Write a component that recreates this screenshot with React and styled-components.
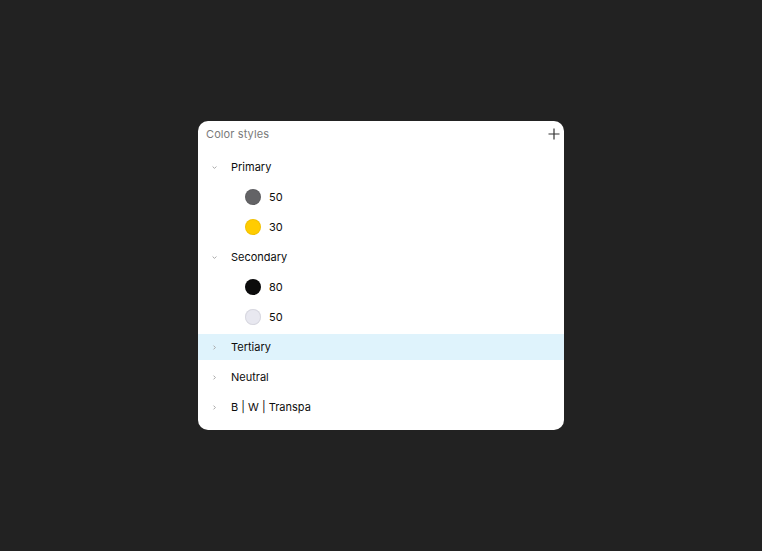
import React from "react"
import styled, { createGlobalStyle } from "styled-components"

const GlobalStyle = createGlobalStyle`
  html, body {
    margin: 0;
    padding: 0;
    background: #222222;
    font-family: Inter, "Noto Sans", sans-serif;
  }
`

const Stage = styled.div`
  width: 762px;
  height: 551px;
  display: flex;
  padding: 121px 0 0 198px;
  box-sizing: border-box;
  background: #222222;
`

const Panel = styled.div`
  width: 366px;
  height: 309px;
  background: #ffffff;
  border-radius: 10px;
  overflow: hidden;
  display: flex;
  flex-direction: column;
`

const Header = styled.div`
  height: 26px;
  display: flex;
  align-items: center;
  justify-content: space-between;
  padding: 0 0 0 8px;
`

const Title = styled.span`
  font-size: 11px;
  color: #7a7a7a;
  letter-spacing: 0.1px;
`

const AddButton = styled.button`
  width: 20px;
  height: 20px;
  border: none;
  background: none;
  padding: 0;
  display: flex;
  align-items: center;
  justify-content: center;
  color: #333;
`

const List = styled.div`
  padding-top: 5px;
  display: flex;
  flex-direction: column;
`

const Row = styled.div`
  height: 26px;
  margin: 2px 0;
  display: flex;
  align-items: center;
  padding-left: ${(p) => (p.$child ? 47 : 14)}px;
  background: ${(p) => (p.$active ? "#dff3fc" : "transparent")};
  font-size: 11px;
  color: #0d0d0d;
`

const Chevron = styled.span`
  width: 5px;
  height: 5px;
  display: flex;
  align-items: center;
  justify-content: center;
  margin-right: 14px;
  color: #a8a8a8;
`

const Swatch = styled.span`
  width: 16px;
  height: 16px;
  border-radius: 50%;
  background: ${(p) => p.$color};
  box-shadow: inset 0 0 0 1px ${(p) => (p.$outline ? "#d8d8e0" : "rgba(0,0,0,0.06)")};
  margin-right: 8px;
  flex-shrink: 0;
`

const ChevronIcon = ({ open }) => (
  <svg width="5" height="5" viewBox="0 0 5 5">
    {open ? (
      <path d="M0.6 1.5 L2.5 3.4 L4.4 1.5" fill="none" stroke="currentColor" strokeWidth="1" />
    ) : (
      <path d="M1.5 0.6 L3.4 2.5 L1.5 4.4" fill="none" stroke="currentColor" strokeWidth="1" />
    )}
  </svg>
)

const groups = [
  {
    name: "Primary",
    open: true,
    items: [
      { label: "50", color: "#636366" },
      { label: "30", color: "#ffcc00" },
    ],
  },
  {
    name: "Secondary",
    open: true,
    items: [
      { label: "80", color: "#0b0b0c" },
      { label: "50", color: "#e8e8f0", outline: true },
    ],
  },
  { name: "Tertiary", active: true, items: [] },
  { name: "Neutral", items: [] },
  { name: "B | W | Transpa", items: [] },
]

const App = () => (
  <Stage>
    <GlobalStyle />
    <Panel>
      <Header>
        <Title>Color styles</Title>
        <AddButton>
          <svg width="12" height="12" viewBox="0 0 12 12">
            <path d="M6 0.5 V11.5 M0.5 6 H11.5" stroke="#333" strokeWidth="1.2" />
          </svg>
        </AddButton>
      </Header>
      <List>
        {groups.map((g) => (
          <React.Fragment key={g.name}>
            <Row $active={g.active}>
              <Chevron>
                <ChevronIcon open={g.open} />
              </Chevron>
              {g.name}
            </Row>
            {g.items.map((it) => (
              <Row $child key={g.name + it.label}>
                <Swatch $color={it.color} $outline={it.outline} />
                {it.label}
              </Row>
            ))}
          </React.Fragment>
        ))}
      </List>
    </Panel>
  </Stage>
)

export default App
